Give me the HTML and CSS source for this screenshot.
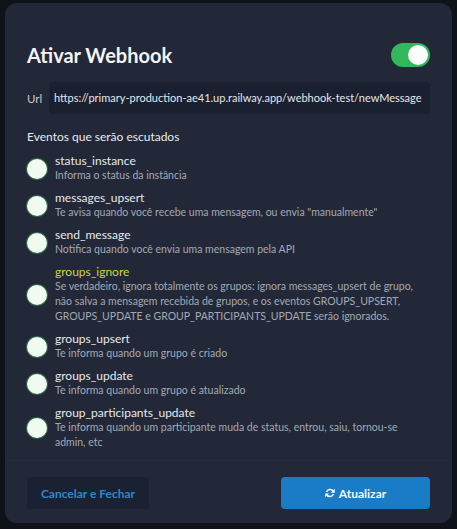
FILE: index.html
```html
<!DOCTYPE html>
<html lang="pt-BR">
<head>
<meta charset="utf-8">
<link rel="stylesheet" href="styles.css">
</head>
<body>
<div class="modal">
  <div class="modal-body">
    <div class="header">
      <h1 class="title">Ativar Webhook</h1>
      <span class="toggle"><span class="knob"></span></span>
    </div>
    <div class="url-row">
      <span class="url-label">Url</span>
      <div class="url-input">https://primary-production-ae41.up.railway.app/webhook-test/newMessage</div>
    </div>
    <div class="events-heading">Eventos que serão escutados</div>
    <ul class="events">
      <li class="event"><span class="dot"></span><div class="event-text"><div class="event-name">status_instance</div><div class="event-desc">Informa o status da instância</div></div></li>
      <li class="event"><span class="dot"></span><div class="event-text"><div class="event-name">messages_upsert</div><div class="event-desc">Te avisa quando você recebe uma mensagem, ou envia "manualmente"</div></div></li>
      <li class="event"><span class="dot"></span><div class="event-text"><div class="event-name">send_message</div><div class="event-desc">Notifica quando você envia uma mensagem pela API</div></div></li>
      <li class="event"><span class="dot"></span><div class="event-text"><div class="event-name highlight">groups_ignore</div><div class="event-desc">Se verdadeiro, ignora totalmente os grupos: ignora messages_upsert de grupo, não salva a mensagem recebida de grupos, e os eventos GROUPS_UPSERT, GROUPS_UPDATE e GROUP_PARTICIPANTS_UPDATE serão ignorados.</div></div></li>
      <li class="event"><span class="dot"></span><div class="event-text"><div class="event-name">groups_upsert</div><div class="event-desc">Te informa quando um grupo é criado</div></div></li>
      <li class="event"><span class="dot"></span><div class="event-text"><div class="event-name">groups_update</div><div class="event-desc">Te informa quando um grupo é atualizado</div></div></li>
      <li class="event"><span class="dot"></span><div class="event-text"><div class="event-name">group_participants_update</div><div class="event-desc">Te informa quando um participante muda de status, entrou, saiu, tornou-se admin, etc</div></div></li>
    </ul>
  </div>
  <div class="footer">
    <button class="btn btn-cancel">Cancelar e Fechar</button>
    <button class="btn btn-primary"><svg class="icon" viewBox="0 0 16 16" width="10" height="10"><path d="M13.2 5.2A6 6 0 0 0 2.4 6.3" fill="none" stroke="#fff" stroke-width="2.4"/><path d="M15.6 1.2v6.2H9.4z" fill="#fff"/><path d="M2.8 10.8a6 6 0 0 0 10.8-1.1" fill="none" stroke="#fff" stroke-width="2.4"/><path d="M0.4 14.8V8.6h6.2z" fill="#fff"/></svg>Atualizar</button>
  </div>
</div>
</body>
</html>
```
FILE: styles.css
```css
* { box-sizing: border-box; }
html, body { margin: 0; padding: 0; }
body {
  background: #0f1219;
  font-family: Lato, "Open Sans", sans-serif;
  width: 457px;
  height: 529px;
  overflow: hidden;
  padding: 3px 5px 0 5px;
}
.modal {
  width: 447px;
  height: 520px;
  background: #222838;
  border-radius: 12px;
  display: flex;
  flex-direction: column;
}
.modal-body {
  padding: 38px 22px 0 22px;
  flex: 1;
}
.header {
  display: flex;
  justify-content: space-between;
  align-items: center;
  height: 28px;
}
.title {
  margin: 0;
  font-size: 20px;
  font-weight: 700;
  color: #f3f4f6;
  line-height: 28px;
}
.toggle {
  width: 39px;
  height: 24px;
  border-radius: 12px;
  background: #30b85a;
  display: flex;
  justify-content: flex-end;
  align-items: center;
  padding: 2px;
}
.knob {
  width: 20px;
  height: 20px;
  border-radius: 50%;
  background: #fbfcfb;
}
.url-row {
  display: flex;
  align-items: center;
  margin-top: 13px;
  gap: 6px;
}
.url-label {
  font-size: 11.5px;
  color: #c5c9d2;
  width: 16px;
}
.url-input {
  flex: 1;
  height: 32px;
  background: #1b2030;
  border-radius: 4px;
  font-size: 11px;
  color: #e4e6ea;
  line-height: 32px;
  padding-left: 5px;
  white-space: nowrap;
  overflow: hidden;
}
.events-heading {
  margin-top: 14px;
  font-size: 12px;
  line-height: 18px;
  color: #e8eaee;
}
.events {
  list-style: none;
  margin: 8px 0 0 0;
  padding: 0;
  display: flex;
  flex-direction: column;
  gap: 8px;
}
.event {
  display: flex;
  align-items: center;
  gap: 8px;
}
.dot {
  flex: none;
  width: 20px;
  height: 20px;
  border-radius: 50%;
  background: #f1fbf1;
  box-shadow: 0 0 0 1px #2f6a48;
}
.event-text { flex: 1; }
.event-name {
  font-size: 12px;
  line-height: 14px;
  color: #e6e8ec;
}
.event-name.highlight { color: #cfd43c; }
.event-desc {
  font-size: 10.5px;
  line-height: 15px;
  color: #a2a8b4;
}
.footer {
  border-top: 1px solid #262c3d;
  padding: 16px 22px 14px 22px;
  display: flex;
  justify-content: space-between;
}
.btn {
  height: 32px;
  border: none;
  border-radius: 4px;
  font-family: Lato, "Open Sans", sans-serif;
  font-size: 12px;
  font-weight: 700;
  display: flex;
  align-items: center;
  justify-content: center;
  gap: 4px;
}
.btn-cancel {
  width: 122px;
  background: #1a2132;
  color: #2d88cf;
}
.btn-primary {
  width: 149px;
  background: #1a7cc7;
  color: #f4f7fb;
}
.icon { display: block; }
```
